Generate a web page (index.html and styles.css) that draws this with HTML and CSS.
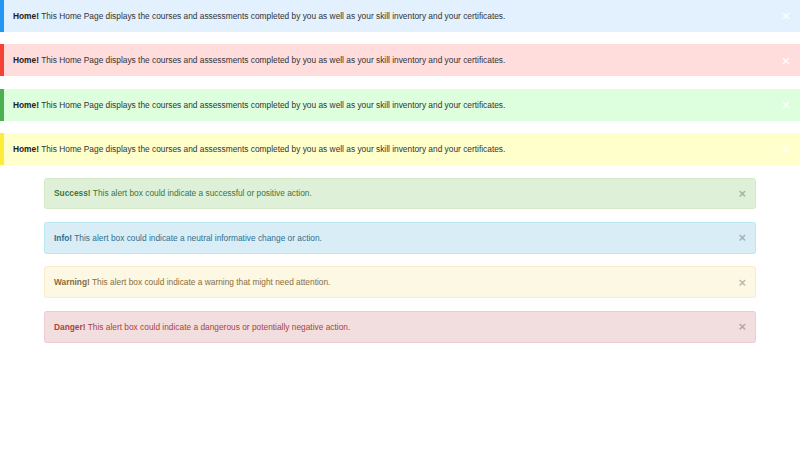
FILE: index.html
```html
<!DOCTYPE html>
<html>
<head>
<meta charset="utf-8">
<link rel="stylesheet" href="styles.css">
</head>
<body>
<div class="panel panel-blue"><p><strong>Home!</strong> This Home Page displays the courses and assessments completed by you as well as your skill inventory and your certificates.</p><span class="pclose">&times;</span></div>
<div class="panel panel-red"><p><strong>Home!</strong> This Home Page displays the courses and assessments completed by you as well as your skill inventory and your certificates.</p><span class="pclose">&times;</span></div>
<div class="panel panel-green"><p><strong>Home!</strong> This Home Page displays the courses and assessments completed by you as well as your skill inventory and your certificates.</p><span class="pclose">&times;</span></div>
<div class="panel panel-yellow"><p><strong>Home!</strong> This Home Page displays the courses and assessments completed by you as well as your skill inventory and your certificates.</p><span class="pclose">&times;</span></div>
<div class="container">
<div class="alert alert-success"><p><strong>Success!</strong> This alert box could indicate a successful or positive action.</p><span class="close">&times;</span></div>
<div class="alert alert-info"><p><strong>Info!</strong> This alert box could indicate a neutral informative change or action.</p><span class="close">&times;</span></div>
<div class="alert alert-warning"><p><strong>Warning!</strong> This alert box could indicate a warning that might need attention.</p><span class="close">&times;</span></div>
<div class="alert alert-danger"><p><strong>Danger!</strong> This alert box could indicate a dangerous or potentially negative action.</p><span class="close">&times;</span></div>
</div>
</body>
</html>
```
FILE: styles.css
```css
html, body {
  margin: 0;
  padding: 0;
  background: #fff;
}
body {
  font-family: "Liberation Sans", Arial, sans-serif;
  font-size: 8.35px;
  color: #333;
}
p {
  margin: 0;
}
.panel {
  height: 31.875px;
  margin-bottom: 12.5px;
  display: flex;
  align-items: center;
  justify-content: space-between;
  box-sizing: border-box;
  padding: 0 7px 0 9px;
  border-left: 4px solid;
  color: #333;
}
.panel strong {
  color: #222;
}
.panel-blue { background: #e3f0fd; border-left-color: #2196f3; }
.panel-red { background: #ffdddd; border-left-color: #f44336; }
.panel-green { background: #ddffdd; border-left-color: #4caf50; }
.panel-yellow { background: #ffffcc; border-left-color: #ffeb3b; }
.pclose {
  color: #fff;
  font-size: 15px;
  line-height: 1;
  width: 14px;
  text-align: center;
}
.container {
  padding: 0 44px;
}
.alert {
  height: 31.875px;
  margin-bottom: 12.5px;
  box-sizing: border-box;
  border: 1px solid;
  border-radius: 2.5px;
  padding: 0 9px;
  display: flex;
  align-items: center;
  justify-content: space-between;
}
.close {
  color: #000;
  opacity: 0.25;
  font-size: 13px;
  font-weight: bold;
  line-height: 1;
}
.alert-success { background: #dff0d8; border-color: #d6e9c6; color: #3c763d; }
.alert-info { background: #d9edf7; border-color: #bce8f1; color: #31708f; }
.alert-warning { background: #fcf8e3; border-color: #faebcc; color: #8a6d3b; }
.alert-danger { background: #f2dede; border-color: #ebccd1; color: #a94442; }
```
